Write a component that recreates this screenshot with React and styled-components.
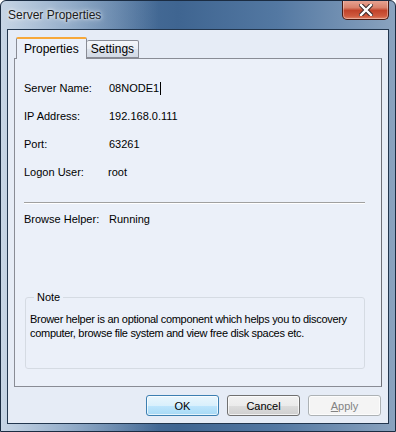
import React from "react";
import styled, { createGlobalStyle } from "styled-components";

const Global = createGlobalStyle`
  html, body { margin: 0; padding: 0; background: #ffffff; }
  * { box-sizing: border-box; }
`;

const Window = styled.div`
  width: 396px;
  height: 432px;
  border: 1px solid #1b2c42;
  border-radius: 6px 6px 0 0;
  display: flex;
  flex-direction: column;
  overflow: hidden;
  background:
    linear-gradient(to right, rgba(210,222,236,0.9) 0%, rgba(190,208,228,0.6) 18%, rgba(60,98,140,0) 40%),
    linear-gradient(to right, #5c80a8 0%, #3f6591 45%, #5378a2 70%, #8aa3bf 100%);
  font-family: "Liberation Sans", Arial, sans-serif;
`;

const TitleBar = styled.div`
  height: 28px;
  display: flex;
  align-items: flex-start;
  padding-left: 7px;
  padding-right: 6px;
`;

const Title = styled.div`
  font-size: 12px;
  color: #1a1a1a;
  line-height: 14px;
  margin-top: 7px;
  text-shadow: 0 0 6px rgba(255,255,255,0.9), 0 0 3px rgba(255,255,255,0.9);
`;

const CloseButton = styled.div`
  margin-left: auto;
  width: 47px;
  height: 20px;
  margin-top: -1px;
  border: 1px solid #4a1a12;
  border-top: none;
  border-radius: 0 0 5px 5px;
  background: linear-gradient(to bottom, #e9a797 0%, #d9826c 40%, #c2432a 55%, #cf5a3e 85%, #e0866a 100%);
  box-shadow: inset 0 0 0 1px rgba(255,255,255,0.35);
  display: flex;
  align-items: center;
  justify-content: center;
`;

const Client = styled.div`
  flex: 1;
  margin: 0 6px 7px 6px;
  border: 1px solid #22364e;
  background: #e6ecf6;
  padding: 7px 6px 0 6px;
  display: flex;
  flex-direction: column;
`;

const TabStrip = styled.div`
  display: flex;
  align-items: flex-end;
  padding-left: 2px;
  height: 21px;
  position: relative;
  z-index: 1;
`;

const Tab = styled.div`
  height: ${p => (p.$active ? "22px" : "18px")};
  margin-bottom: ${p => (p.$active ? "-1px" : "0")};
  padding: 0 ${p => (p.$active ? "7px" : "4px")};
  font-size: 12px;
  color: #000;
  display: flex;
  align-items: center;
  border: 1px solid #898c95;
  border-bottom: ${p => (p.$active ? "none" : "1px solid #898c95")};
  border-left: ${p => (p.$active ? "1px solid #898c95" : "none")};
  border-top: ${p => (p.$active ? "2px solid #f7a839" : "1px solid #898c95")};
  border-radius: 2px 2px 0 0;
  background: ${p =>
    p.$active
      ? "#ebf0f9"
      : "linear-gradient(to bottom, #f4f6fa 0%, #e9edf3 50%, #dde3ec 50%, #d3dae5 100%)"};
`;

const Panel = styled.div`
  height: 329px;
  border: 1px solid #898c95;
  border-right-color: #6e7078;
  background: #ebf0f9;
  padding: 15px 16px 0 9px;
  display: flex;
  flex-direction: column;
`;

const Row = styled.div`
  display: flex;
  align-items: center;
  height: 28px;
  font-size: 11px;
  color: #000;
`;

const Label = styled.div`
  width: 85px;
  flex-shrink: 0;
`;

const Value = styled.div`
  display: flex;
  align-items: center;
  margin-left: ${p => p.$shift || 0}px;
`;

const Caret = styled.span`
  display: inline-block;
  width: 1px;
  height: 13px;
  background: #000;
  margin-left: 1px;
`;

const Separator = styled.div`
  height: 2px;
  border-top: 1px solid #a0a0a0;
  border-bottom: 1px solid #ffffff;
  margin: 16px 0 1px 0;
`;

const Group = styled.fieldset`
  margin: 58px 0 0 1px;
  padding: 9px 4px 0 4px;
  border: 1px solid #d5dbe3;
  border-radius: 3px;
  height: 78px;
  font-size: 11px;
`;

const Legend = styled.legend`
  padding: 0 3px;
  margin-left: 4px;
  font-size: 11px;
  color: #000;
`;

const NoteText = styled.div`
  font-size: 11px;
  line-height: 14px;
  letter-spacing: -0.3px;
  color: #000;
`;

const ButtonRow = styled.div`
  display: flex;
  justify-content: flex-end;
  gap: 8px;
  padding-top: 8px;
  padding-right: 1px;
`;

const Button = styled.div`
  width: 73px;
  height: 21px;
  border-radius: 3px;
  font-size: 11px;
  display: flex;
  align-items: center;
  justify-content: center;
  border: 1px solid ${p => (p.$variant === "default" ? "#3c7fb1" : p.$variant === "disabled" ? "#adb2b5" : "#707070")};
  color: ${p => (p.$variant === "disabled" ? "#838383" : "#000")};
  background: ${p =>
    p.$variant === "disabled"
      ? "#f4f4f4"
      : p.$variant === "default"
      ? "linear-gradient(to bottom, #eaf6fd 0%, #d9f0fc 50%, #bee6fd 50%, #a7d9f5 100%)"
      : "linear-gradient(to bottom, #f2f2f2 0%, #ebebeb 50%, #dddddd 50%, #cfcfcf 100%)"};
  box-shadow: inset 0 0 0 1px rgba(255,255,255,0.7);
  u { text-decoration: underline; }
`;

export default function App() {
  return (
    <>
      <Global />
      <Window>
        <TitleBar>
          <Title>Server Properties</Title>
          <CloseButton>
            <svg width="14" height="12" viewBox="0 0 14 12">
              <path d="M2 1 L12 11 M12 1 L2 11" stroke="#3a2a2a" strokeWidth="4.4" strokeLinecap="square" />
              <path d="M2 1 L12 11 M12 1 L2 11" stroke="#ffffff" strokeWidth="2.4" strokeLinecap="square" />
            </svg>
          </CloseButton>
        </TitleBar>
        <Client>
          <TabStrip>
            <Tab $active>Properties</Tab>
            <Tab>Settings</Tab>
          </TabStrip>
          <Panel>
            <Row>
              <Label>Server Name:</Label>
              <Value>08NODE1<Caret /></Value>
            </Row>
            <Row>
              <Label>IP Address:</Label>
              <Value>192.168.0.111</Value>
            </Row>
            <Row>
              <Label>Port:</Label>
              <Value>63261</Value>
            </Row>
            <Row>
              <Label>Logon User:</Label>
              <Value $shift={-1}>root</Value>
            </Row>
            <Separator />
            <Row>
              <Label>Browse Helper:</Label>
              <Value>Running</Value>
            </Row>
            <Group>
              <Legend>Note</Legend>
              <NoteText>
                Brower helper is an optional component which helps you to discovery computer, browse file system and view free disk spaces etc.
              </NoteText>
            </Group>
          </Panel>
          <ButtonRow>
            <Button $variant="default">OK</Button>
            <Button>Cancel</Button>
            <Button $variant="disabled"><span><u>A</u>pply</span></Button>
          </ButtonRow>
        </Client>
      </Window>
    </>
  );
}
